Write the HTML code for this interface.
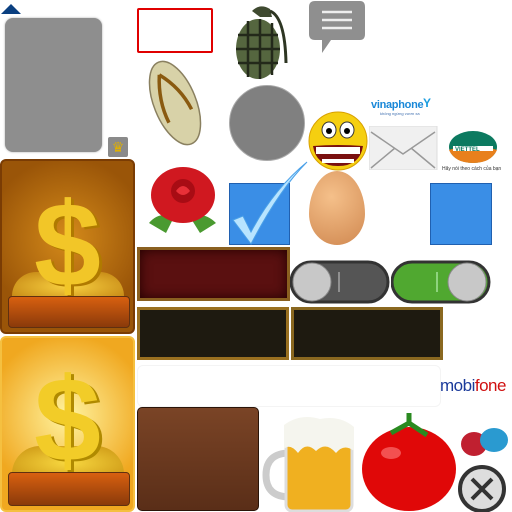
<!DOCTYPE html><html><head><style>
body{margin:0;width:512px;height:512px;background:#fff;position:relative;overflow:hidden;font-family:"Liberation Sans",sans-serif}
.a{position:absolute}
.d{position:absolute;text-align:center;font-weight:bold;line-height:1}
</style></head><body>
<div class="a" style="left:1px;top:4px;width:0;height:0;border-left:10px solid transparent;border-right:10px solid transparent;border-bottom:10px solid #0a3f80"></div>
<div class="a" style="left:5px;top:18px;width:97px;height:134px;background:#8e8e8e;border-radius:8px;box-shadow:0 0 2px #aaa"></div>
<div class="a" style="left:108px;top:137px;width:20px;height:20px;background:#8a8a8a;border-radius:2px;color:#e0b000;font-size:14px;text-align:center;line-height:20px">♛</div>
<div class="a" style="left:137px;top:8px;width:72px;height:41px;border:2px solid #e00000;border-radius:2px"></div>
<svg class="a" style="left:230px;top:3px" width="62" height="78"><path d="M22 8 Q30 0 40 6 L42 14 L30 14 Z" fill="#3f4a30"/><path d="M40 8 Q55 14 56 60" stroke="#2d3522" stroke-width="3" fill="none"/><ellipse cx="28" cy="46" rx="22" ry="30" fill="#55663f"/><g stroke="#23291a" stroke-width="2.5"><line x1="8" y1="32" x2="48" y2="32"/><line x1="6" y1="46" x2="50" y2="46"/><line x1="8" y1="60" x2="48" y2="60"/><line x1="18" y1="18" x2="18" y2="74"/><line x1="30" y1="16" x2="30" y2="76"/><line x1="42" y1="20" x2="42" y2="72"/></g></svg>
<svg class="a" style="left:309px;top:1px" width="57" height="52"><path d="M6 0 H51 Q56 0 56 6 V33 Q56 39 51 39 H22 L13 52 L13 39 H6 Q0 39 0 33 V6 Q0 0 6 0Z" fill="#8f8f8f"/><g stroke="#eee" stroke-width="2.5"><line x1="13" y1="11" x2="43" y2="11"/><line x1="13" y1="19" x2="43" y2="19"/><line x1="13" y1="27" x2="43" y2="27"/></g></svg>
<svg class="a" style="left:138px;top:55px" width="74" height="96"><g transform="rotate(-22 37 48)"><ellipse cx="37" cy="48" rx="21" ry="44" fill="#d8d2a8" stroke="#8a8060" stroke-width="1.5"/><path d="M33 16 Q22 40 24 64 M33 16 Q48 36 50 60" stroke="#8a5a10" stroke-width="3.5" fill="none"/></g></svg>
<div class="a" style="left:229px;top:85px;width:74px;height:74px;border-radius:50%;background:#808080;border:1px solid #aaa"></div>
<svg class="a" style="left:308px;top:110px" width="60" height="62"><circle cx="30" cy="31" r="29" fill="#f5cf10" stroke="#d8a000"/><ellipse cx="21" cy="20" rx="7" ry="8" fill="#fff" stroke="#333"/><ellipse cx="39" cy="20" rx="7" ry="8" fill="#fff" stroke="#333"/><circle cx="21" cy="21" r="3" fill="#000"/><circle cx="39" cy="21" r="3" fill="#000"/><path d="M5 36 Q30 34 55 36 Q52 56 30 56 Q8 56 5 36Z" fill="#7a1010"/><rect x="8" y="37" width="44" height="7" fill="#fff"/><rect x="14" y="49" width="32" height="4" fill="#fff"/></svg>
<div class="a" style="left:371px;top:99px;color:#1a88d8;font-size:11px;font-weight:bold;letter-spacing:-0.3px">vinaphone</div>
<div class="a" style="left:423px;top:96px;color:#1a9de0;font-size:12px;font-weight:bold">Y</div>
<div class="a" style="left:380px;top:111px;color:#4070b0;font-size:4px">không ngừng vươn xa</div>
<svg class="a" style="left:369px;top:126px" width="69" height="44"><rect x="0" y="0" width="68" height="44" fill="#f0f0f0" stroke="#ddd"/><path d="M2 6 L34 28 L66 6 M2 42 L26 22 M66 42 L42 22" stroke="#999" stroke-width="1.5" fill="none"/></svg>
<svg class="a" style="left:441px;top:130px" width="66" height="42"><ellipse cx="32" cy="17" rx="24" ry="16" fill="#0c7a60"/><path d="M8 20 Q32 12 56 20 Q50 33 32 33 Q14 33 8 20Z" fill="#e8801c"/><rect x="12" y="16" width="40" height="5" fill="#fff"/><text x="14" y="21" font-size="6" fill="#0c7a60" font-weight="bold">VIETTEL</text><text x="1" y="40" font-size="5" fill="#333">Hãy nói theo cách của bạn</text></svg>
<div class="a" style="left:0;top:159px;width:135px;height:175px;background:radial-gradient(circle at 50% 45%,#d48a1a,#9a5508 70%);border:2px solid #7a3c04;box-sizing:border-box;border-radius:6px"></div>
<div class="a" style="left:12px;top:272px;width:112px;height:24px;background:radial-gradient(ellipse at 50% 60%,#f8d040,#c08010);border-radius:30px 30px 0 0"></div>
<div class="d" style="left:0;width:135px;top:185px;font-size:120px;color:#f2c628;text-shadow:3px 2px 0 #b07a00">$</div>
<div class="a" style="left:8px;top:296px;width:120px;height:30px;background:linear-gradient(#d86010,#8a3a0a);border:1px solid #603010;border-radius:4px"></div>
<div class="a" style="left:0;top:336px;width:135px;height:176px;background:radial-gradient(circle at 50% 45%,#fff4a0,#f0a820 70%);border:2px solid #f5c040;box-sizing:border-box;border-radius:6px"></div>
<div class="a" style="left:12px;top:446px;width:112px;height:28px;background:radial-gradient(ellipse at 50% 60%,#f8d840,#c89010);border-radius:30px 30px 0 0"></div>
<div class="d" style="left:0;width:135px;top:360px;font-size:120px;color:#f2cc28;text-shadow:3px 2px 0 #b08a00">$</div>
<div class="a" style="left:8px;top:472px;width:120px;height:32px;background:linear-gradient(#d86010,#8a3a0a);border:1px solid #603010;border-radius:4px"></div>
<svg class="a" style="left:144px;top:161px" width="78" height="78"><path d="M5 62 Q15 50 30 56 L22 72Z M72 62 Q60 50 46 56 L56 72Z" fill="#4a9a30"/><ellipse cx="39" cy="34" rx="32" ry="28" fill="#d01820"/><circle cx="39" cy="30" r="12" fill="#a80c14"/><path d="M32 30 Q39 20 46 30 Q39 38 32 30" fill="#e83038"/></svg>
<div class="a" style="left:229px;top:183px;width:61px;height:62px;background:#3a8ee6;border:1px solid #2060b0;box-sizing:border-box"></div>
<svg class="a" style="left:229px;top:160px" width="80" height="86"><path d="M4 60 L14 56 L22 72 Q44 30 78 2 Q50 30 22 84 Z" fill="#b8e4ff" stroke="#4aa0e8"/></svg>
<div class="a" style="left:309px;top:171px;width:56px;height:74px;border-radius:50% 50% 50% 50%/58% 58% 42% 42%;background:radial-gradient(circle at 40% 35%,#f5c08a,#d08850)"></div>
<div class="a" style="left:430px;top:183px;width:62px;height:62px;background:#3a8ee6;border:1px solid #2060b0;box-sizing:border-box"></div>
<div class="a" style="left:137px;top:247px;width:153px;height:54px;background:#5a1010;border:3px solid #8a6020;box-sizing:border-box;box-shadow:inset 0 0 12px #200"></div>
<svg class="a" style="left:290px;top:260px" width="100" height="44"><rect x="1" y="2" width="97" height="40" rx="20" fill="#555" stroke="#333" stroke-width="3"/><circle cx="22" cy="22" r="19" fill="#c8c8c8" stroke="#888"/><line x1="49" y1="12" x2="49" y2="32" stroke="#ccc"/></svg>
<svg class="a" style="left:391px;top:260px" width="100" height="44"><rect x="1" y="2" width="97" height="40" rx="20" fill="#50a830" stroke="#333" stroke-width="3"/><circle cx="76" cy="22" r="19" fill="#c8c8c8" stroke="#888"/><line x1="46" y1="12" x2="46" y2="32" stroke="#cfc"/></svg>
<div class="a" style="left:137px;top:307px;width:152px;height:53px;background:#1e1a10;border:3px solid #9a7020;box-sizing:border-box"></div>
<div class="a" style="left:291px;top:307px;width:152px;height:53px;background:#1e1a10;border:3px solid #8a6820;box-sizing:border-box"></div>
<div class="a" style="left:137px;top:365px;width:302px;height:40px;border:1px solid #f4f4f4;border-radius:6px"></div>
<div class="a" style="left:440px;top:376px;color:#1a3a9a;font-size:17px;letter-spacing:-0.5px">mobi<span style="color:#d01010">fone</span></div>
<div class="a" style="left:137px;top:407px;width:122px;height:104px;background:linear-gradient(#7a4426,#5a2e18);border:1px solid #2a1408;box-sizing:border-box;border-radius:5px"></div>
<svg class="a" style="left:260px;top:413px" width="100" height="99"><path d="M30 40 Q6 40 6 62 Q6 84 30 84" stroke="#ccc" stroke-width="7" fill="none"/><rect x="26" y="20" width="66" height="78" rx="6" fill="#f0b020" stroke="#ddd" stroke-width="3"/><path d="M24 12 Q40 0 60 6 Q80 2 94 14 L94 38 Q84 30 76 40 Q66 28 56 38 Q46 28 38 40 Q30 30 24 36Z" fill="#f5f5ee"/></svg>
<svg class="a" style="left:361px;top:413px" width="98" height="99"><ellipse cx="48" cy="56" rx="47" ry="42" fill="#e00808"/><ellipse cx="30" cy="40" rx="10" ry="6" fill="#ff8080" opacity=".6"/><path d="M30 20 L48 10 L66 22 M48 10 L48 0" stroke="#2a8a20" stroke-width="5" fill="none"/></svg>
<svg class="a" style="left:460px;top:426px" width="50" height="36"><ellipse cx="14" cy="18" rx="13" ry="12" fill="#c02030"/><ellipse cx="34" cy="14" rx="14" ry="12" fill="#2a9ad0"/></svg>
<svg class="a" style="left:457px;top:465px" width="50" height="47"><circle cx="25" cy="24" r="22" fill="#ddd" stroke="#333" stroke-width="4"/><path d="M15 14 L35 34 M35 14 L15 34" stroke="#333" stroke-width="4"/></svg>
</body></html>
